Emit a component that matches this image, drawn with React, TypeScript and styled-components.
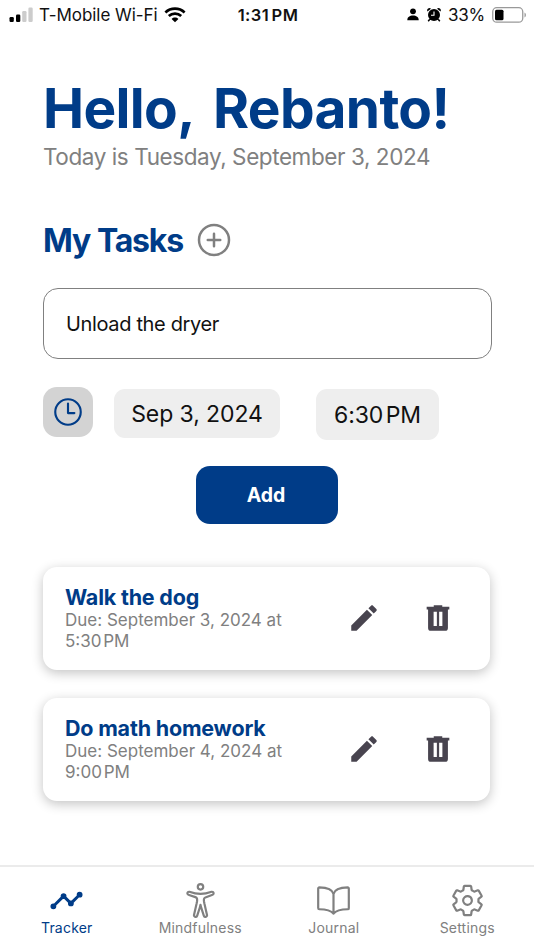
import React from 'react';
import styled, { createGlobalStyle } from 'styled-components';
import {
  IoAccessibilityOutline,
  IoAddCircleOutline,
  IoBookOutline,
  IoSettingsOutline,
  IoTimeOutline,
} from 'react-icons/io5';

const navy = '#003c88';
const gray = '#808080';

const GlobalStyle = createGlobalStyle`
  * { box-sizing: border-box; }
  body { margin: 0; background: #fff; font-family: Inter, 'Liberation Sans', sans-serif; }
  button { font: inherit; border: 0; padding: 0; background: none; display: flex; align-items: center; justify-content: center; }
  h1, h2, h3, p { margin: 0; }
  svg { display: block; flex: none; }
`;

const Screen = styled.div`
  width: 534px;
  height: 950px;
  display: flex;
  flex-direction: column;
  overflow: hidden;
  background: #fff;
`;

const StatusBar = styled.header`
  height: 30px;
  display: grid;
  grid-template-columns: 1fr auto 1fr;
  align-items: center;
  padding: 0 7px 0 9px;
  font-size: 17px;
  line-height: 30px;
  color: #111;
`;

const StatusGroup = styled.div<{ $end?: boolean }>`
  display: flex;
  align-items: center;
  justify-content: ${(p) => (p.$end ? 'flex-end' : 'flex-start')};
`;

const Carrier = styled.span`
  margin: 0 6px 0 6px;
  letter-spacing: -0.05px;
`;

const Clock = styled.span`
  font-weight: 600;
  font-size: 16.5px;
  letter-spacing: 0.5px;
  word-spacing: -2.5px;
`;

const Percent = styled.span`
  margin: 0 7px 0 7px;
  letter-spacing: -0.2px;
`;

const Content = styled.main`
  flex: 1;
  padding: 44px 42px 0 43px;
`;

const Greeting = styled.h1`
  font-size: 55px;
  line-height: 68px;
  font-weight: 700;
  letter-spacing: -0.65px;
  word-spacing: 7.5px;
  white-space: nowrap;
  color: ${navy};
`;

const Today = styled.p`
  padding-top: 1px;
  font-size: 22.5px;
  line-height: 28px;
  letter-spacing: -0.42px;
  white-space: nowrap;
  color: ${gray};
`;

const TasksHeader = styled.div`
  display: flex;
  align-items: center;
  height: 40px;
  margin-top: 49px;
`;

const TasksTitle = styled.h2`
  width: 151px;
  padding-top: 2px;
  font-size: 32px;
  line-height: 40px;
  font-weight: 700;
  letter-spacing: -1.2px;
  word-spacing: 0.5px;
  white-space: nowrap;
  color: ${navy};
`;

const AddTask = styled.button`
  width: 40px;
  height: 40px;
  color: ${gray};
`;

const TaskInput = styled.input`
  display: block;
  width: 449px;
  height: 71px;
  margin-top: 28px;
  padding: 0 22px;
  border: 1.5px solid ${gray};
  border-radius: 15px;
  outline: 0;
  background: #fff;
  font: 400 20px Inter, sans-serif;
  letter-spacing: -0.35px;
  color: #111;
`;

const DueRow = styled.div`
  display: flex;
  align-items: flex-start;
  height: 53px;
  margin-top: 28px;
`;

const ClockButton = styled.button`
  width: 50px;
  height: 50px;
  border-radius: 14px;
  background: #d3d3d3;
  color: ${navy};
`;

const Pill = styled.button<{ $width: number; $height: number; $gap: number; $word?: number }>`
  width: ${(p) => p.$width}px;
  height: ${(p) => p.$height}px;
  margin: 2px 0 0 ${(p) => p.$gap}px;
  border-radius: 11px;
  background: #eee;
  font-size: 23px;
  letter-spacing: -0.08px;
  word-spacing: ${(p) => p.$word ?? 0}px;
  white-space: nowrap;
  color: #111;
`;

const SubmitButton = styled.button`
  width: 142px;
  height: 58px;
  margin: 26px 0 0 153px;
  padding-right: 2px;
  border-radius: 14px;
  background: ${navy};
  font-size: 19.5px;
  font-weight: 700;
  color: #fff;
`;

const TaskList = styled.section`
  display: flex;
  flex-direction: column;
  gap: 28px;
  margin-top: 43px;
`;

const Card = styled.article`
  width: 447px;
  height: 103px;
  display: flex;
  align-items: center;
  padding: 0 35px 2px 22px;
  border-radius: 14px;
  background: #fff;
  box-shadow: 0 3px 12px rgba(0, 0, 0, 0.24);
`;

const CardText = styled.div`
  width: 235px;
  margin-right: 46px;
`;

const CardTitle = styled.h3`
  font-size: 21.5px;
  line-height: 26px;
  font-weight: 700;
  letter-spacing: -0.2px;
  white-space: nowrap;
  color: ${navy};
`;

const CardDue = styled.p`
  font-size: 17px;
  line-height: 21px;
  color: ${gray};
`;

const Time = styled.span`
  display: block;
  word-spacing: -3px;
`;

const IconButton = styled.button`
  width: 35px;
  height: 35px;
  color: #48444f;
  & + & {
    margin-left: 39px;
  }
`;

const TabBar = styled.nav`
  height: 85px;
  display: grid;
  grid-template-columns: repeat(4, 1fr);
  border-top: 2px solid #ebebeb;
`;

const Tab = styled.button<{ $active?: boolean }>`
  flex-direction: column;
  justify-content: flex-start;
  padding-top: 16px;
  font-size: 14px;
  line-height: 19px;
  letter-spacing: 0.2px;
  color: ${(p) => (p.$active ? navy : gray)};
`;

const MaterialIcon = ({ path, size = 35 }: { path: string; size?: number }) => (
  <svg width={size} height={size} viewBox="0 0 24 24" fill="currentColor">
    <path d={path} />
  </svg>
);

const pencil =
  'M20.71,7.04C21.1,6.65 21.1,6 20.71,5.63L18.37,3.29C18,2.9 17.35,2.9 16.96,3.29L15.12,5.12L18.87,8.87M3,17.25V21H6.75L17.81,9.93L14.06,6.18L3,17.25Z';
const trash =
  'M9,3V4H4V6H5V19A2,2 0 0,0 7,21H17A2,2 0 0,0 19,19V6H20V4H15V3H9M8.9,7.6H11.2V17.6H8.9V7.6M12.8,7.6H15.1V17.6H12.8V7.6Z';
const timeline =
  'M3,14L3.5,14.07L8.07,9.5C7.89,8.85 8.06,8.11 8.59,7.59C9.37,6.8 10.63,6.8 11.41,7.59C11.94,8.11 12.11,8.85 11.93,9.5L14.5,12.07L15,12C15.18,12 15.35,12 15.5,12.07L19.07,8.5C19,8.35 19,8.18 19,8A2,2 0 0,1 21,6A2,2 0 0,1 23,8A2,2 0 0,1 21,10C20.82,10 20.65,10 20.5,9.93L16.93,13.5C17,13.65 17,13.82 17,14A2,2 0 0,1 15,16A2,2 0 0,1 13,14L13.07,13.5L10.5,10.93C10.18,11 9.82,11 9.5,10.93L4.93,15.5L5,16A2,2 0 0,1 3,18A2,2 0 0,1 1,16A2,2 0 0,1 3,14Z';

const SignalIcon = () => (
  <svg width="24" height="16" viewBox="0 0 24 16">
    <rect x="0.5" y="10" width="4.3" height="5" rx="1.2" fill="#000" />
    <rect x="7" y="7.5" width="4.3" height="7.5" rx="1.2" fill="#000" />
    <rect x="13.2" y="4" width="4.3" height="11" rx="1.2" fill="#ccc" />
    <rect x="19.4" y="0.5" width="4.3" height="14.5" rx="1.2" fill="#ccc" />
  </svg>
);

const WifiIcon = () => (
  <svg width="22" height="16" viewBox="0 0 22 16" fill="none" stroke="#000" strokeWidth="2.7">
    <path d="M1.4 5.4C6.8 0.3 15.2 0.3 20.6 5.4" />
    <path d="M4.8 9C8.3 5.8 13.7 5.8 17.2 9" />
    <path d="M7.6 11.9C9.5 10.1 12.5 10.1 14.4 11.9L11 15.3Z" fill="#000" stroke="none" />
  </svg>
);

const PersonIcon = () => (
  <svg width="12" height="13" viewBox="0 0 12 13">
    <circle cx="6" cy="3.3" r="2.9" />
    <path d="M0.3 12.2C0.3 9 2.7 7.5 6 7.5S11.7 9 11.7 12.2Z" />
  </svg>
);

const AlarmIcon = () => (
  <svg width="14" height="14" viewBox="0 0 14 14">
    <path d="M0.4 3.4A2.3 2.3 0 0 1 4 0.7ZM13.6 3.4A2.3 2.3 0 0 0 10 0.7Z" />
    <circle cx="7" cy="6.9" r="6" />
    <path d="M2.8 11.2L1.2 13.2M11.2 11.2L12.8 13.2" stroke="#000" strokeWidth="1.5" />
    <path d="M7 3.5V7.2H4" fill="none" stroke="#fff" strokeWidth="1.1" />
  </svg>
);

const BatteryIcon = () => (
  <svg width="35" height="17" viewBox="0 0 35 17">
    <rect x="0.75" y="0.7" width="30" height="14.5" rx="4" fill="none" stroke="#999" strokeWidth="1.3" />
    <rect x="3" y="2.7" width="8.5" height="10.5" rx="1.5" />
    <path d="M32.5 5.5C34.4 6.2 34.4 9.7 32.5 10.4Z" fill="#999" />
  </svg>
);

const IconGroup = styled.div`
  display: flex;
  align-items: center;
  gap: 8px;
  padding-bottom: 1px;
`;

const tasks = [
  { title: 'Walk the dog', date: 'September 3, 2024', time: '5:30 PM' },
  { title: 'Do math homework', date: 'September 4, 2024', time: '9:00 PM' },
];

export default function App() {
  return (
    <Screen>
      <GlobalStyle />
      <StatusBar>
        <StatusGroup>
          <SignalIcon />
          <Carrier>T-Mobile Wi-Fi</Carrier>
          <WifiIcon />
        </StatusGroup>
        <Clock>1:31 PM</Clock>
        <StatusGroup $end>
          <IconGroup>
            <PersonIcon />
            <AlarmIcon />
          </IconGroup>
          <Percent>33%</Percent>
          <BatteryIcon />
        </StatusGroup>
      </StatusBar>
      <Content>
        <Greeting>Hello, Rebanto!</Greeting>
        <Today>Today is Tuesday, September 3, 2024</Today>
        <TasksHeader>
          <TasksTitle>My Tasks</TasksTitle>
          <AddTask aria-label="New task">
            <IoAddCircleOutline size={40} />
          </AddTask>
        </TasksHeader>
        <TaskInput defaultValue="Unload the dryer" />
        <DueRow>
          <ClockButton aria-label="Reminder time">
            <IoTimeOutline size={34} />
          </ClockButton>
          <Pill $width={166} $height={49} $gap={21}>Sep 3, 2024</Pill>
          <Pill $width={123} $height={51} $gap={36} $word={-4}>6:30 PM</Pill>
        </DueRow>
        <SubmitButton>Add</SubmitButton>
        <TaskList>
          {tasks.map((task) => (
            <Card key={task.title}>
              <CardText>
                <CardTitle>{task.title}</CardTitle>
                <CardDue>
                  Due: {task.date} at <Time>{task.time}</Time>
                </CardDue>
              </CardText>
              <IconButton aria-label="Edit">
                <MaterialIcon path={pencil} size={34} />
              </IconButton>
              <IconButton aria-label="Delete">
                <MaterialIcon path={trash} size={34} />
              </IconButton>
            </Card>
          ))}
        </TaskList>
      </Content>
      <TabBar>
        <Tab $active>
          <MaterialIcon path={timeline} />
          Tracker
        </Tab>
        <Tab>
          <IoAccessibilityOutline size={35} />
          Mindfulness
        </Tab>
        <Tab>
          <IoBookOutline size={35} />
          Journal
        </Tab>
        <Tab>
          <IoSettingsOutline size={35} />
          Settings
        </Tab>
      </TabBar>
    </Screen>
  );
}
